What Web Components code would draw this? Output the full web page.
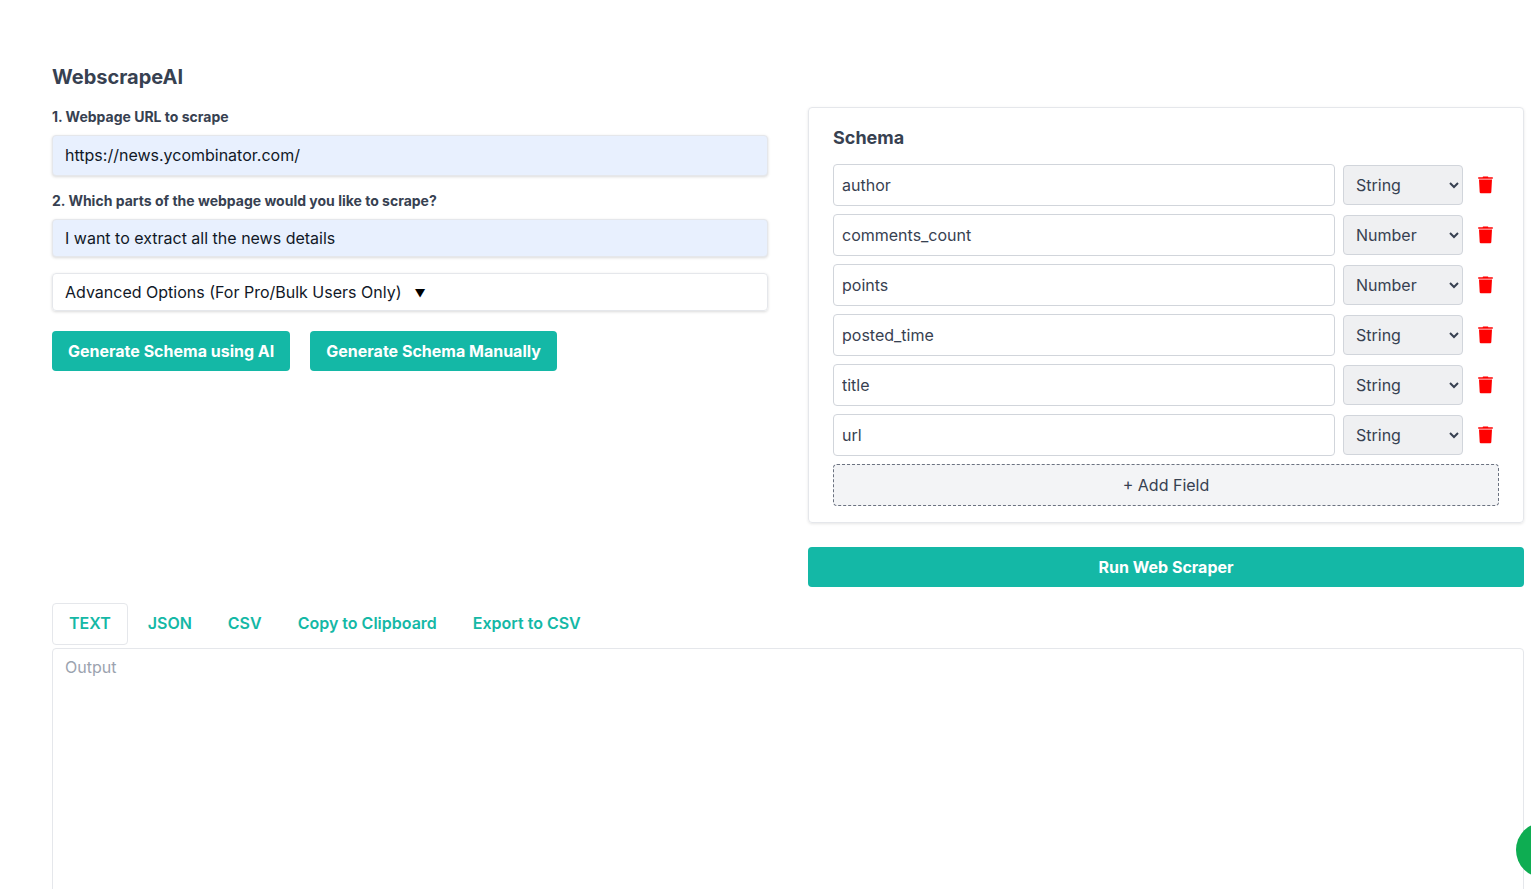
<!DOCTYPE html>
<html>
<head>
<meta charset="utf-8">
<title>WebscrapeAI</title>
<style>
    html, body { margin: 0; height: 100%; overflow: hidden; background: #fff; }
    body { font-family: Inter, "Liberation Sans", sans-serif; color: #374151; }
</style>
</head>
<body>
<ws-app></ws-app>
<script>
class WsField extends HTMLElement {
    constructor() {
        super();
        this.attachShadow({ mode: 'open' });
    }

    connectedCallback() {
        var _label = this.getAttribute('label');
        var _value = this.getAttribute('value');
        var _height = this.getAttribute('height');
        var _after = this.getAttribute('after');
        var _bottom = this.getAttribute('bottom') || 0;

        this.shadowRoot.innerHTML = `
        <style>
            :host { display: block; margin-bottom: ${_after}px; }
            label {
                display: block;
                font-size: 14px;
                line-height: 20px;
                font-weight: 700;
                margin-bottom: 8px;
            }
            input {
                display: block;
                box-sizing: border-box;
                width: 100%;
                height: ${_height}px;
                padding: 0 12px ${_bottom}px;
                border: 1px solid #e5e7eb;
                border-radius: 4px;
                background: #e8f0fe;
                box-shadow: 0 1px 3px rgba(0,0,0,.15);
                font: 16px Inter, sans-serif;
                color: #111827;
                outline: none;
            }
        </style>
        <label>${_label}</label>
        <input type="text" value="${_value}">
        `;
    }
}
customElements.define('ws-field', WsField);

class WsAdvanced extends HTMLElement {
    constructor() {
        super();
        this.attachShadow({ mode: 'open' });
        this.shadowRoot.innerHTML = `
        <style>
            :host {
                display: block;
                box-sizing: border-box;
                height: 38px;
                padding: 0 12px;
                border: 1px solid #e5e7eb;
                border-radius: 4px;
                box-shadow: 0 1px 3px rgba(0,0,0,.15);
                font-size: 16px;
                line-height: 36px;
                color: #111827;
            }
            span { margin-left: 13px; font-size: 11px; color: #000; vertical-align: 1px; }
        </style>
        <slot></slot><span>▼</span>
        `;
    }
}
customElements.define('ws-advanced', WsAdvanced);

class WsButton extends HTMLElement {
    constructor() {
        super();
        this.attachShadow({ mode: 'open' });
        this.shadowRoot.innerHTML = `
        <style>
            :host {
                display: block;
                box-sizing: border-box;
                height: 40px;
                padding: 0 16px;
                border-radius: 4px;
                background: #14b8a6;
                color: #fff;
                font-size: 16px;
                font-weight: 700;
                line-height: 40px;
                text-align: center;
            }
        </style>
        <slot></slot>
        `;
    }
}
customElements.define('ws-button', WsButton);

class WsRow extends HTMLElement {
    constructor() {
        super();
        this.attachShadow({ mode: 'open' });
    }

    connectedCallback() {
        var _name = this.getAttribute('name');
        var _type = this.getAttribute('type');
        const options = ['String', 'Number'].map( o => {
            return `<option ${o == _type ? 'selected' : ''}>${o}</option>`
        })

        this.shadowRoot.innerHTML = `
        <style>
            :host { display: flex; align-items: center; gap: 8px; margin-bottom: 8px; }
            input {
                box-sizing: border-box;
                flex: 1;
                min-width: 0;
                height: 42px;
                padding: 0 8px;
                border: 1px solid #d1d5db;
                border-radius: 4px;
                font: 16px Inter, sans-serif;
                color: #374151;
                outline: none;
            }
            select {
                box-sizing: border-box;
                width: 120px;
                height: 40px;
                padding: 0 8px;
                border: 1px solid #d1d5db;
                border-radius: 4px;
                background: #eff0f2;
                font: 16px Inter, sans-serif;
                color: #374151;
            }
            svg { width: 15px; height: 18px; margin: 0 6px 0 7px; fill: #ff0000; flex: none; }
        </style>
        <input type="text" value="${_name}">
        <select>${options.join('')}</select>
        <svg viewBox="0 0 15 18"><path d="M5 .4h5l.4.8H14.800v1.500H.2V1.200h4.400zM1 3.500h13l-.7 12.800q-.1 1-1.100 1H2.800q-1 0-1.100-1z"/></svg>
        `;
    }
}
customElements.define('ws-row', WsRow);

class WsSchema extends HTMLElement {
    constructor() {
        super();
        this.attachShadow({ mode: 'open' });
        this.shadowRoot.innerHTML = `
        <style>
            :host {
                display: block;
                box-sizing: border-box;
                height: 416px;
                padding: 18px 24px 16px;
                border: 1px solid #e5e7eb;
                border-radius: 4px;
                box-shadow: 0 1px 3px rgba(0,0,0,.1);
            }
            h2 { margin: 0 0 14px; font-size: 18px; line-height: 24px; font-weight: 700; }
            .add {
                box-sizing: border-box;
                height: 42px;
                border: 1px dashed #6b7280;
                border-radius: 4px;
                background: #f3f4f6;
                font-size: 16px;
                line-height: 40px;
                text-align: center;
            }
        </style>
        <h2>Schema</h2>
        <slot></slot>
        <div class="add">+ Add Field</div>
        `;
    }
}
customElements.define('ws-schema', WsSchema);

class WsTabs extends HTMLElement {
    constructor() {
        super();
        this._tabs = ['TEXT', 'JSON', 'CSV', 'Copy to Clipboard', 'Export to CSV'];
        this.attachShadow({ mode: 'open' });
        const tabs = this._tabs.map( (tab, i) => {
            return `<div class="${i == 0 ? 'tab on' : 'tab'}">${tab}</div>`
        })
        this.shadowRoot.innerHTML = `
        <style>
            :host { display: flex; height: 42px; margin-bottom: 3px; }
            .tab {
                box-sizing: border-box;
                padding: 0 17px;
                border: 1px solid transparent;
                border-radius: 4px;
                color: #14b8a6;
                font-size: 16px;
                font-weight: 600;
                line-height: 38px;
            }
            .on { border-color: #e5e7eb; padding: 0 16px; margin-right: 2px; }
        </style>
        ${tabs.join('')}
        `;
    }
}
customElements.define('ws-tabs', WsTabs);

class WsOutput extends HTMLElement {
    constructor() {
        super();
        this.attachShadow({ mode: 'open' });
        this.shadowRoot.innerHTML = `
        <style>
            :host {
                display: block;
                box-sizing: border-box;
                height: 300px;
                padding: 8px 12px;
                border: 1px solid #e5e7eb;
                border-radius: 4px;
                color: #9ca3af;
                font-size: 16px;
                line-height: 20px;
            }
        </style>
        <slot></slot>
        `;
    }
}
customElements.define('ws-output', WsOutput);

class WsApp extends HTMLElement {
    constructor() {
        super();
        this.attachShadow({ mode: 'open' });
        this.shadowRoot.innerHTML = `
        <style>
            :host { display: block; padding: 63px 7px 0 52px; }
            h1 { margin: 0 0 16px; font-size: 20px; line-height: 28px; font-weight: 700; }
            .cols { display: grid; grid-template-columns: 716px 716px; gap: 40px; }
            .btns { display: flex; gap: 20px; margin-top: 20px; }
            .right { padding-top: 44px; }
            .run { margin-top: 24px; }
            ws-tabs { margin-top: 16px; }
            .bubble {
                position: fixed;
                left: 1516px;
                top: 822px;
                width: 56px;
                height: 56px;
                border-radius: 50%;
                background: #0ead52;
            }
        </style>
        <div class="cols">
            <div class="left">
                <h1>WebscrapeAI</h1>
                <ws-field label="1. Webpage URL to scrape" value="https://news.ycombinator.com/" height="41" after="15" bottom="2"></ws-field>
                <ws-field label="2. Which parts of the webpage would you like to scrape?" value="I want to extract all the news details" height="38" after="16"></ws-field>
                <ws-advanced>Advanced Options (For Pro/Bulk Users Only)</ws-advanced>
                <div class="btns">
                    <ws-button>Generate Schema using AI</ws-button>
                    <ws-button>Generate Schema Manually</ws-button>
                </div>
            </div>
            <div class="right">
                <ws-schema>
                    <ws-row name="author" type="String"></ws-row>
                    <ws-row name="comments_count" type="Number"></ws-row>
                    <ws-row name="points" type="Number"></ws-row>
                    <ws-row name="posted_time" type="String"></ws-row>
                    <ws-row name="title" type="String"></ws-row>
                    <ws-row name="url" type="String"></ws-row>
                </ws-schema>
                <ws-button class="run">Run Web Scraper</ws-button>
            </div>
        </div>
        <ws-tabs></ws-tabs>
        <ws-output>Output</ws-output>
        <div class="bubble"></div>
        `;
    }
}
customElements.define('ws-app', WsApp);
</script>
</body>
</html>
